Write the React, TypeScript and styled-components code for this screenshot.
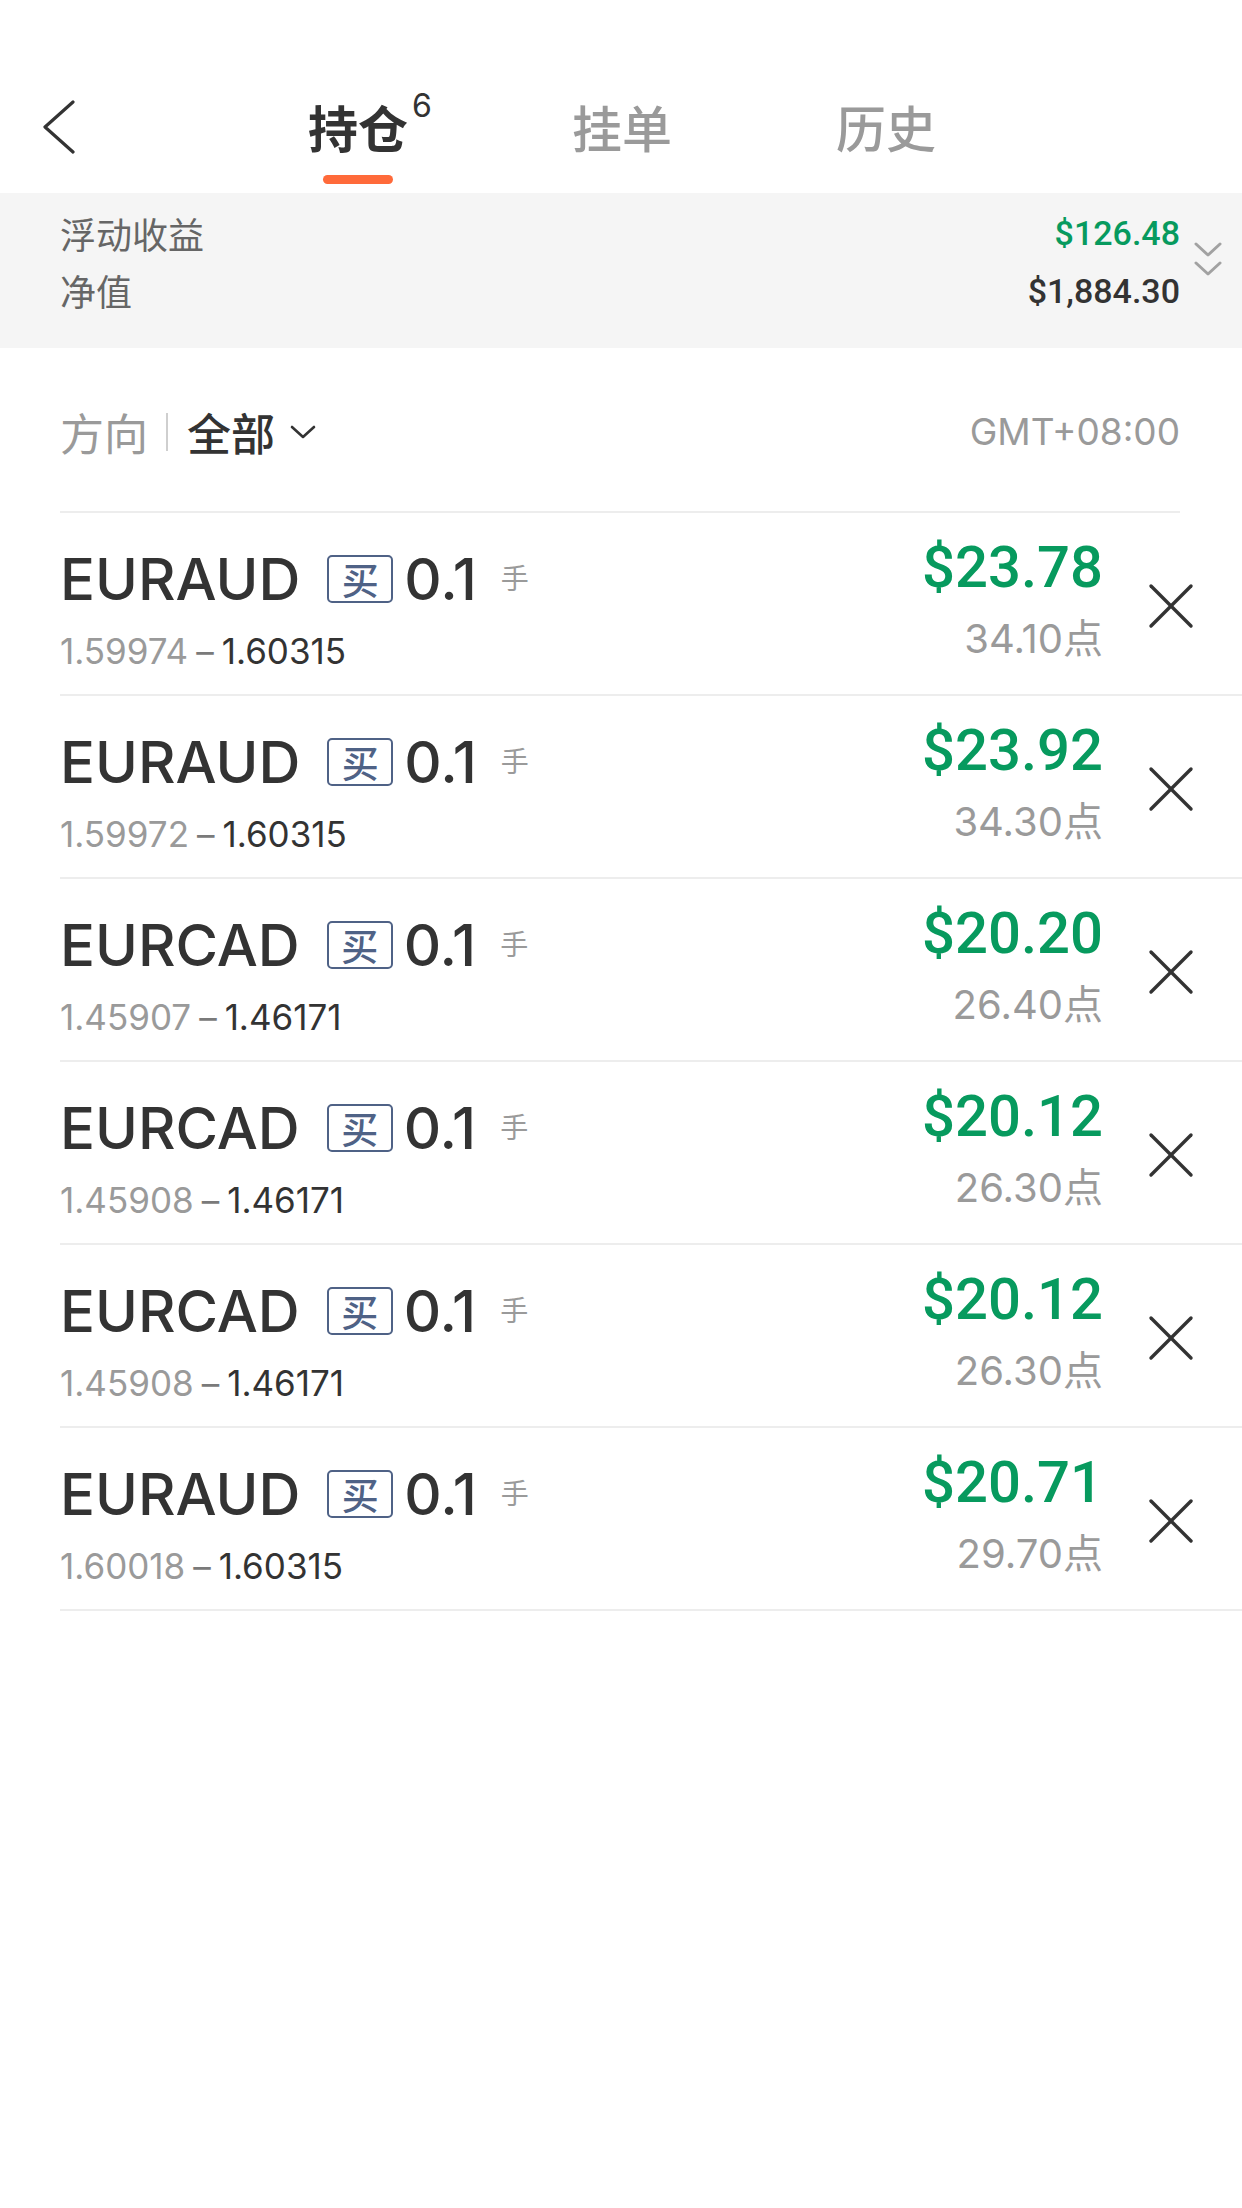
import React from "react";
import styled, { createGlobalStyle } from "styled-components";

const GlobalStyle = createGlobalStyle`
  html, body {
    margin: 0;
    padding: 0;
    background: #ffffff;
  }
  body {
    font-family: "Inter", "Noto Sans CJK SC", sans-serif;
    color: #333333;
    -webkit-font-smoothing: antialiased;
  }
  * { box-sizing: border-box; }
`;

const CJK = `"Noto Sans CJK SC", "Noto Sans", sans-serif`;
const LATIN = `"Inter", "Noto Sans CJK SC", sans-serif`;
const NUM = `"Roboto", "Inter", sans-serif`;

const Page = styled.div`
  width: 1242px;
  min-height: 2208px;
  background: #ffffff;
`;

const Header = styled.header`
  display: flex;
  align-items: flex-start;
  height: 193px;
  padding: 96px 0 0 42px;
`;

const BackButton = styled.button`
  border: none;
  background: none;
  padding: 0;
  margin-top: 4px;
  width: 34px;
  height: 54px;
  display: flex;
  cursor: pointer;
`;

const Tabs = styled.nav`
  display: flex;
  gap: 164px;
  margin-left: 232px;
`;

const Tab = styled.div`
  position: relative;
  display: flex;
  flex-direction: column;
  align-items: center;
`;

const TabLabel = styled.span<{ $active?: boolean }>`
  font-family: ${CJK};
  font-size: 50px;
  line-height: 60px;
  font-weight: ${(p) => (p.$active ? 700 : 500)};
  color: ${(p) => (p.$active ? "#333333" : "#9a9a9a")};
  white-space: nowrap;
`;

const TabCount = styled.sup`
  position: absolute;
  left: 104px;
  top: -6px;
  font-family: ${LATIN};
  font-size: 32px;
  line-height: 32px;
  font-weight: 400;
  color: #333333;
`;

const TabIndicator = styled.div<{ $active?: boolean }>`
  margin-top: 19px;
  width: 70px;
  height: 9px;
  border-radius: 5px;
  background: ${(p) => (p.$active ? "#ff6a3a" : "transparent")};
`;

const Summary = styled.section`
  display: flex;
  align-items: flex-start;
  height: 155px;
  background: #f5f5f5;
  padding: 12px 20px 0 60px;
`;

const SummaryLabels = styled.div`
  display: flex;
  flex-direction: column;
  flex: 1;
`;

const SummaryLabel = styled.div`
  font-family: ${CJK};
  font-size: 36px;
  line-height: 57px;
  color: #666666;
`;

const SummaryValues = styled.div`
  display: flex;
  flex-direction: column;
  align-items: flex-end;
  margin-top: -1px;
`;

const SummaryValue = styled.div<{ $green?: boolean }>`
  font-family: ${NUM};
  font-size: 34px;
  line-height: 58px;
  font-weight: 500;
  color: ${(p) => (p.$green ? "#079a5e" : "#333333")};
`;

const ExpandIcon = styled.div`
  margin: 37px 0 0 14px;
  width: 28px;
  height: 36px;
  display: flex;
`;

const FilterRow = styled.div`
  display: flex;
  align-items: center;
  height: 165px;
  margin: 0 62px 0 60px;
  padding-top: 4px;
  border-bottom: 2px solid #ededed;
`;

const FilterLabel = styled.span`
  font-family: ${CJK};
  font-size: 44px;
  color: #9a9a9a;
`;

const FilterDivider = styled.span`
  width: 2px;
  height: 38px;
  margin: 0 19px 0 18px;
  background: #cfcfcf;
`;

const FilterValue = styled.span`
  font-family: ${CJK};
  font-size: 44px;
  font-weight: 500;
  color: #333333;
`;

const FilterCaret = styled.span`
  display: flex;
  margin-left: 15px;
  margin-top: 2px;
`;

const TimeZone = styled.span`
  margin-left: auto;
  font-family: ${LATIN};
  font-size: 37px;
  color: #9a9a9a;
`;

const List = styled.div`
  display: flex;
  flex-direction: column;
`;

const Row = styled.div`
  display: flex;
  align-items: flex-start;
  height: 183px;
  margin-left: 60px;
  padding-right: 48px;
  border-bottom: 2px solid #ededed;
`;

const Left = styled.div`
  flex: 1;
  display: flex;
  flex-direction: column;
  padding-top: 34px;
`;

const SymbolLine = styled.div`
  display: flex;
  align-items: center;
  height: 64px;
`;

const Symbol = styled.span`
  font-family: ${LATIN};
  font-size: 58px;
  font-weight: 500;
  color: #333333;
  margin-right: 27px;
`;

const Badge = styled.span`
  display: flex;
  align-items: center;
  justify-content: center;
  width: 66px;
  height: 48px;
  border: 2.5px solid #4f6286;
  border-radius: 5px;
  font-family: ${CJK};
  font-size: 37px;
  font-weight: 500;
  line-height: 1;
  color: #4f6286;
  margin-right: 11px;
`;

const Lots = styled.span`
  font-family: ${LATIN};
  font-size: 58px;
  font-weight: 500;
  color: #333333;
  margin-right: 24px;
`;

const Unit = styled.span`
  font-family: ${CJK};
  font-size: 28px;
  color: #9a9a9a;
  margin-top: -4px;
`;

const PriceLine = styled.div`
  display: flex;
  align-items: center;
  margin-top: 18px;
  height: 44px;
  font-family: ${LATIN};
  font-size: 35px;
`;

const PriceOpen = styled.span`
  color: #9a9a9a;
`;

const PriceDash = styled.span`
  color: #7a7a7a;
  margin: 0 8px;
`;

const PriceNow = styled.span`
  color: #333333;
`;

const Right = styled.div`
  display: flex;
  flex-direction: column;
  align-items: flex-end;
  padding-top: 22px;
`;

const Pnl = styled.span`
  font-family: ${NUM};
  font-size: 58px;
  line-height: 64px;
  font-weight: 500;
  color: #079a5e;
`;

const Points = styled.span`
  margin-top: 13px;
  font-family: ${LATIN};
  font-size: 40px;
  line-height: 48px;
  color: #9a9a9a;
  & > em {
    font-style: normal;
    font-family: ${CJK};
  }
`;

const CloseButton = styled.button`
  align-self: center;
  margin: 4px 0 0 45px;
  width: 46px;
  height: 46px;
  padding: 0;
  border: none;
  background: none;
  display: flex;
  cursor: pointer;
`;

type Position = {
  symbol: string;
  open: string;
  now: string;
  pnl: string;
  pts: string;
};

const positions: Position[] = [
  { symbol: "EURAUD", open: "1.59974", now: "1.60315", pnl: "$23.78", pts: "34.10" },
  { symbol: "EURAUD", open: "1.59972", now: "1.60315", pnl: "$23.92", pts: "34.30" },
  { symbol: "EURCAD", open: "1.45907", now: "1.46171", pnl: "$20.20", pts: "26.40" },
  { symbol: "EURCAD", open: "1.45908", now: "1.46171", pnl: "$20.12", pts: "26.30" },
  { symbol: "EURCAD", open: "1.45908", now: "1.46171", pnl: "$20.12", pts: "26.30" },
  { symbol: "EURAUD", open: "1.60018", now: "1.60315", pnl: "$20.71", pts: "29.70" },
];

const BackIcon = () => (
  <svg width="34" height="54" viewBox="0 0 34 54" fill="none">
    <polyline points="31,2 3,27 31,52" stroke="#333" strokeWidth="3.2" strokeLinecap="round" strokeLinejoin="round" />
  </svg>
);

const DoubleChevron = () => (
  <svg width="28" height="36" viewBox="0 0 28 36" fill="none">
    <polyline points="2,2 14,13 26,2" stroke="#a2a2a2" strokeWidth="3" strokeLinecap="round" strokeLinejoin="round" />
    <polyline points="2,21 14,32 26,21" stroke="#a2a2a2" strokeWidth="3" strokeLinecap="round" strokeLinejoin="round" />
  </svg>
);

const Caret = () => (
  <svg width="26" height="15" viewBox="0 0 26 15" fill="none">
    <polyline points="2,2 13,12 24,2" stroke="#333" strokeWidth="2.6" strokeLinecap="round" strokeLinejoin="round" />
  </svg>
);

const CloseIcon = () => (
  <svg width="46" height="46" viewBox="0 0 46 46" fill="none">
    <line x1="3" y1="3" x2="43" y2="43" stroke="#333" strokeWidth="3.4" strokeLinecap="round" />
    <line x1="43" y1="3" x2="3" y2="43" stroke="#333" strokeWidth="3.4" strokeLinecap="round" />
  </svg>
);

export default function App() {
  return (
    <Page>
      <GlobalStyle />
      <Header>
        <BackButton aria-label="back">
          <BackIcon />
        </BackButton>
        <Tabs>
          <Tab>
            <TabLabel $active>持仓</TabLabel>
            <TabCount>6</TabCount>
            <TabIndicator $active />
          </Tab>
          <Tab>
            <TabLabel>挂单</TabLabel>
            <TabIndicator />
          </Tab>
          <Tab>
            <TabLabel>历史</TabLabel>
            <TabIndicator />
          </Tab>
        </Tabs>
      </Header>

      <Summary>
        <SummaryLabels>
          <SummaryLabel>浮动收益</SummaryLabel>
          <SummaryLabel>净值</SummaryLabel>
        </SummaryLabels>
        <SummaryValues>
          <SummaryValue $green>$126.48</SummaryValue>
          <SummaryValue>$1,884.30</SummaryValue>
        </SummaryValues>
        <ExpandIcon>
          <DoubleChevron />
        </ExpandIcon>
      </Summary>

      <FilterRow>
        <FilterLabel>方向</FilterLabel>
        <FilterDivider />
        <FilterValue>全部</FilterValue>
        <FilterCaret>
          <Caret />
        </FilterCaret>
        <TimeZone>GMT+08:00</TimeZone>
      </FilterRow>

      <List>
        {positions.map((p, i) => (
          <Row key={i}>
            <Left>
              <SymbolLine>
                <Symbol>{p.symbol}</Symbol>
                <Badge>买</Badge>
                <Lots>0.1</Lots>
                <Unit>手</Unit>
              </SymbolLine>
              <PriceLine>
                <PriceOpen>{p.open}</PriceOpen>
                <PriceDash>–</PriceDash>
                <PriceNow>{p.now}</PriceNow>
              </PriceLine>
            </Left>
            <Right>
              <Pnl>{p.pnl}</Pnl>
              <Points>
                {p.pts}
                <em>点</em>
              </Points>
            </Right>
            <CloseButton aria-label="close">
              <CloseIcon />
            </CloseButton>
          </Row>
        ))}
      </List>
    </Page>
  );
}
